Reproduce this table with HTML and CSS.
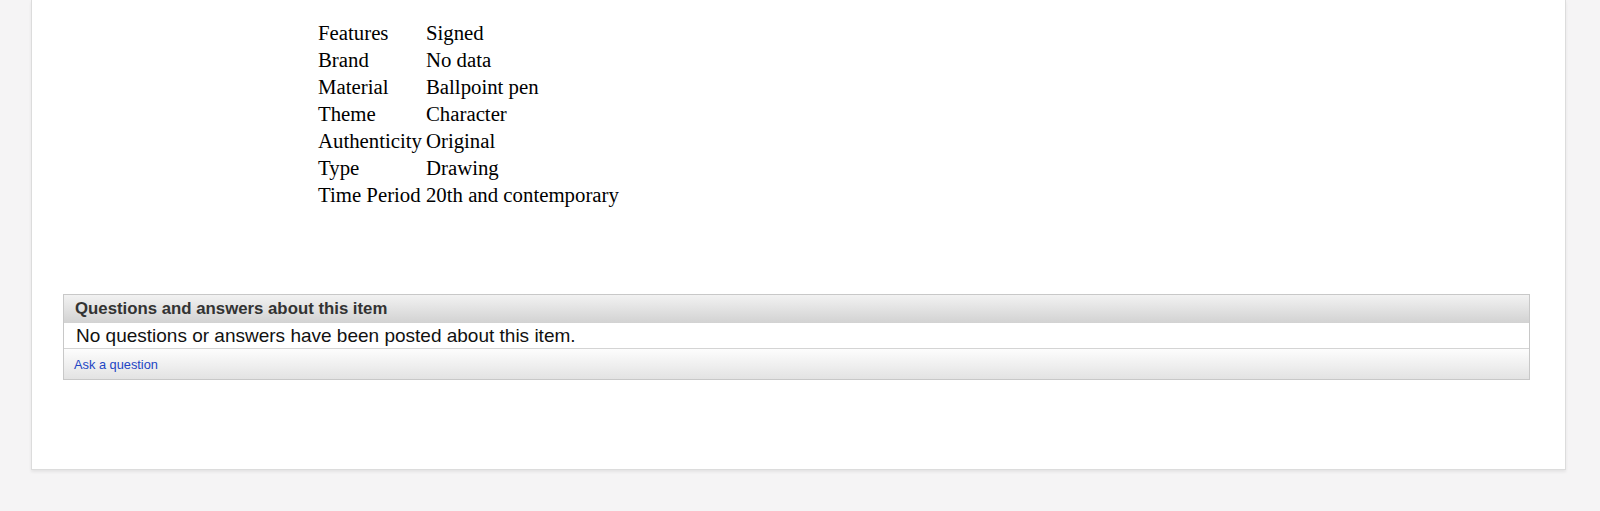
FILE: index.html
```html
<!DOCTYPE html>
<html>
<head>
<meta charset="utf-8">
<link rel="stylesheet" href="styles.css">
</head>
<body>
<div class="card">
  <table class="specs">
    <tr><td>Features</td><td>Signed</td></tr>
    <tr><td>Brand</td><td>No data</td></tr>
    <tr><td>Material</td><td>Ballpoint pen</td></tr>
    <tr><td>Theme</td><td>Character</td></tr>
    <tr><td>Authenticity</td><td>Original</td></tr>
    <tr><td>Type</td><td>Drawing</td></tr>
    <tr><td>Time Period</td><td>20th and contemporary</td></tr>
  </table>
  <div class="qa">
    <div class="qa-head">Questions and answers about this item</div>
    <div class="qa-body">No questions or answers have been posted about this item.</div>
    <div class="qa-foot"><a href="#">Ask a question</a></div>
  </div>
</div>
</body>
</html>
```
FILE: styles.css
```css
html, body {
  margin: 0;
  padding: 0;
  background: #f5f4f5;
}
body {
  height: 511px;
  overflow: hidden;
}
.card {
  margin-left: 31px;
  width: 1535px;
  box-sizing: border-box;
  height: 470px;
  background: #fff;
  border: 1px solid #dcdcdc;
  border-top: none;
  box-shadow: 0 2px 3px rgba(0, 0, 0, 0.07);
  padding-top: 18px;
}
.specs {
  margin-left: 283px;
  border-collapse: separate;
  border-spacing: 2px;
  font-family: "Liberation Serif", "Times New Roman", serif;
  font-size: 20.8px;
  line-height: 23px;
  color: #000;
}
.specs td {
  padding: 1px;
  white-space: nowrap;
}
.qa {
  margin-top: 85px;
  margin-left: 31px;
  width: 1467px;
  box-sizing: border-box;
  border: 1px solid #c8c8c8;
  font-family: "Liberation Sans", Arial, Helvetica, sans-serif;
}
.qa-head {
  height: 28px;
  line-height: 28px;
  padding-left: 11px;
  font-size: 16.8px;
  font-weight: bold;
  color: #333;
  background: linear-gradient(#f2f2f2, #d2d2d2);
}
.qa-body {
  height: 25px;
  line-height: 26px;
  padding-left: 12px;
  font-size: 19px;
  color: #111;
  background: #fff;
  border-bottom: 1px solid #d4d4d4;
}
.qa-foot {
  height: 30px;
  line-height: 31px;
  padding-left: 10px;
  font-size: 12.8px;
  background: linear-gradient(#fdfdfd, #e3e3e3);
}
.qa-foot a {
  color: #2245c4;
  text-decoration: none;
}
```
